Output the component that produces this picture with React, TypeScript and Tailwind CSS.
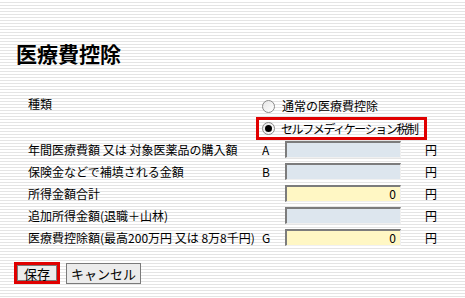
const rows = [
  { label: "年間医療費額 又は 対象医薬品の購入額", mark: "A", value: "", yellow: false },
  { label: "保険金などで補填される金額", mark: "B", value: "", yellow: false },
  { label: "所得金額合計", mark: "", value: "0", yellow: true },
  { label: "追加所得金額(退職＋山林)", mark: "", value: "", yellow: false },
  { label: "医療費控除額(最高200万円 又は 8万8千円)", mark: "G", value: "0", yellow: true },
];

function Radio({ checked }: { checked?: boolean }) {
  return (
    <span className="flex h-[13px] w-[13px] shrink-0 items-center justify-center rounded-full border border-[#8a8a8a] bg-[linear-gradient(135deg,#e6e6e6,#ffffff)]">
      {checked && <span className="h-[7px] w-[7px] rounded-full bg-black" />}
    </span>
  );
}

export default function App() {
  return (
    <div className="h-[298px] w-[465px] overflow-hidden bg-[repeating-linear-gradient(to_bottom,#ffffff_0px,#ffffff_2px,#e4e4e4_2px,#e4e4e4_3px)] font-['Noto_Sans_CJK_JP',sans-serif] text-[12px] leading-none text-black">
      <h1 className="pl-[16px] pt-[43px] text-[21px] font-bold leading-none">医療費控除</h1>

      <div className="mt-[33px] flex pl-[28px]">
        <span className="w-[228px] pt-[1px]">種類</span>
        <div className="flex flex-col">
          <label className="flex h-[18px] items-center gap-[7px] pl-[6px]">
            <Radio />
            <span className="whitespace-nowrap">通常の医療費控除</span>
          </label>
          <label className="mt-[2px] flex h-[23px] w-[171px] items-center gap-[6px] border-[3px] border-[#e00000] pl-[3px]">
            <Radio checked />
            <span className="whitespace-nowrap tracking-[-1.4px]">セルフメディケーション税制</span>
          </label>
        </div>
      </div>

      <div className="mt-[1px] flex flex-col gap-[5px] pl-[28px]">
        {rows.map((r) => (
          <div key={r.label} className="flex h-[17px] items-center">
            <span className="w-[234px] whitespace-nowrap">{r.label}</span>
            <span className="w-[23px]">{r.mark}</span>
            <span
              className={`flex h-[17px] w-[116px] items-center justify-end border-t-2 border-l-2 border-t-[#7c7c7c] border-l-[#7c7c7c] border-r border-b border-r-[#f0f0f0] border-b-[#f0f0f0] pr-[4px] ${
                r.yellow ? "bg-[#fff7c4]" : "bg-[#dde6ee]"
              }`}
            >
              {r.value}
            </span>
            <span className="ml-[24px]">円</span>
          </div>
        ))}
      </div>

      <div className="mt-[16px] flex items-center gap-[6px] pl-[14px]">
        <div className="border-[3px] border-[#e00000]">
          <button className="flex h-[16px] items-center border border-[#7a7a7a] bg-[#ececec] px-[6px] text-[13px] leading-none">保存</button>
        </div>
        <button className="h-[21px] w-[75px] border border-[#7a7a7a] bg-[#ececec] text-[13px] leading-none">キャンセル</button>
      </div>
    </div>
  );
}
